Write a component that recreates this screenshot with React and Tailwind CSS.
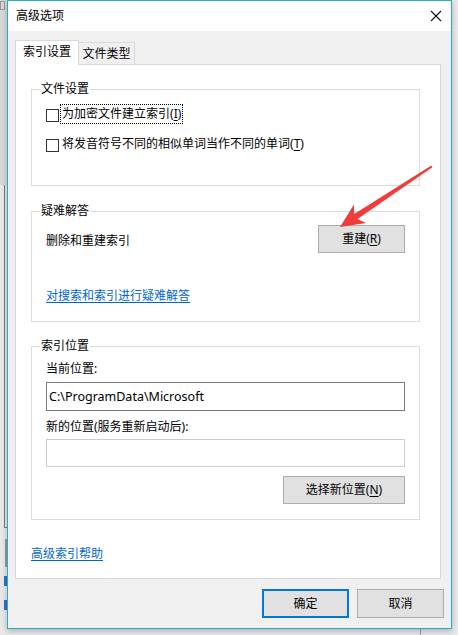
import React from "react";

// Access-key letter, e.g. (R) with the R underlined
function Key({ k }) {
    return (
        <>
            (<span className="underline underline-offset-2">{k}</span>)
        </>
    );
}

function GroupBox({ title, className, children }) {
    return (
        <div
            className={
                "relative ml-[15px] w-[389px] border border-[#dcdcdc] " +
                className
            }
        >
            <span className="absolute left-[8px] top-[-9px] bg-white px-[1px] leading-[16px]">
                {title}
            </span>
            {children}
        </div>
    );
}

function Checkbox({ label, focused }) {
    return (
        <div className="flex h-[20px] items-center">
            <span className="mt-[2px] h-[13px] w-[13px] border border-[#333333] bg-white" />
            <span
                className={
                    "ml-[2px] px-[1px] leading-[18px] " +
                    (focused
                        ? "outline outline-1 outline-dotted outline-black"
                        : "")
                }
            >
                {label}
            </span>
        </div>
    );
}

function Button({ children, className }) {
    return (
        <button
            className={
                "flex h-[28px] items-center justify-center border border-[#adadad] bg-[#e1e1e1] leading-[16px] " +
                className
            }
        >
            {children}
        </button>
    );
}

function Backdrop() {
    return (
        <div className="absolute left-0 top-0 h-full w-full">
            <div className="absolute left-0 top-0 h-[185px] w-[7px] bg-[#d9d9d9]" />
            <div className="absolute left-0 top-[1px] h-[9px] w-[5px] border border-[#9a9a9a]" />
            <div className="absolute left-[4px] top-[185px] h-[343px] w-px bg-[#7d7d7d]" />
            <div className="absolute left-[4px] top-[527px] h-px w-[3px] bg-[#7d7d7d]" />
            <div className="absolute left-[5px] top-[539px] h-[28px] w-[2px] border border-[#9a9a9a] bg-[#e1e1e1]" />
            <div className="absolute left-[4px] top-[576px] h-[10px] w-[3px] bg-[#3a6fd0]" />
            <div className="absolute left-[4px] top-[600px] h-[10px] w-[3px] bg-[#3a6fd0]" />
            <div className="absolute left-[420px] top-[628px] h-[7px] w-px bg-[#a0a0a0]" />
        </div>
    );
}

export default function App() {
    return (
        <div className="relative h-[635px] w-[458px] overflow-hidden bg-[#e9e9e9] font-['Noto_Sans','Noto_Sans_CJK_SC',sans-serif] text-[12px] leading-[16px] text-black">
            <Backdrop />

            <div className="relative ml-[7px] flex h-[629px] w-[445px] flex-col border border-[#27adc6] bg-[#f0f0f0] shadow-[0_2px_6px_rgba(0,0,0,0.25)]">
                {/* title bar */}
                <div className="flex h-[30px] items-center justify-between bg-white pl-[8px] pr-[9px]">
                    <span>高级选项</span>
                    <svg width="12" height="12" viewBox="0 0 12 12">
                        <path
                            d="M1 1 L11 11 M11 1 L1 11"
                            stroke="#111"
                            strokeWidth="1.1"
                            fill="none"
                        />
                    </svg>
                </div>

                <div className="flex flex-1 flex-col px-[7px] pt-[9px]">
                    {/* tabs */}
                    <div className="relative z-10 flex h-[24px] items-start">
                        <div className="flex h-[25px] w-[64px] items-center justify-center border border-b-0 border-[#d9d9d9] bg-white pb-[2px]">
                            索引设置
                        </div>
                        <div className="mt-[2px] flex h-[22px] w-[56px] items-center justify-center border border-l-0 border-b-0 border-[#d9d9d9] bg-[#f0f0f0]">
                            文件类型
                        </div>
                    </div>

                    <div className="flex h-[515px] w-[426px] flex-col border border-[#d9d9d9] bg-white">
                        <GroupBox title="文件设置" className="mt-[24px] h-[97px]">
                            <div className="flex flex-col gap-[10px] pl-[14px] pt-[14px]">
                                <Checkbox
                                    focused
                                    label={
                                        <>
                                            为加密文件建立索引<Key k="I" />
                                        </>
                                    }
                                />
                                <Checkbox
                                    label={
                                        <>
                                            将发音符号不同的相似单词当作不同的单词
                                            <Key k="T" />
                                        </>
                                    }
                                />
                            </div>
                        </GroupBox>

                        <GroupBox title="疑难解答" className="mt-[25px] h-[111px]">
                            <div className="flex items-start justify-between pl-[14px] pr-[14px] pt-[13px]">
                                <span className="mt-[8px]">删除和重建索引</span>
                                <Button className="w-[87px]">
                                    重建<Key k="R" />
                                </Button>
                            </div>
                            <div className="mt-[35px] pl-[14px]">
                                <span className="text-[#0066cc] underline underline-offset-2">
                                    对搜索和索引进行疑难解答
                                </span>
                            </div>
                        </GroupBox>

                        <GroupBox title="索引位置" className="mt-[24px] h-[174px]">
                            <div className="flex flex-col pl-[14px] pr-[14px] pt-[14px]">
                                <span>当前位置:</span>
                                <div className="mt-[5px] flex h-[29px] items-center border border-[#7a7a7a] px-[2px] text-[12.5px]">
                                    C:\ProgramData\Microsoft
                                </div>
                                <span className="mt-[8px]">新的位置(服务重新启动后):</span>
                                <div className="mt-[4px] h-[28px] border border-[#cccccc]" />
                                <Button className="ml-auto mt-[9px] w-[122px]">
                                    选择新位置<Key k="N" />
                                </Button>
                            </div>
                        </GroupBox>

                        <div className="ml-[15px] mt-[26px]">
                            <span className="text-[#0066cc] underline underline-offset-2">
                                高级索引帮助
                            </span>
                        </div>
                    </div>

                    {/* dialog buttons */}
                    <div className="mt-[10px] flex justify-end gap-[8px]">
                        <button className="flex h-[29px] w-[87px] items-center justify-center border-2 border-[#0078d7] bg-[#e1e1e1]">
                            确定
                        </button>
                        <Button className="h-[29px] w-[87px]">取消</Button>
                    </div>
                </div>
            </div>

            {/* red annotation arrow */}
            <svg
                className="pointer-events-none absolute left-0 top-0"
                width="458"
                height="635"
            >
                <g transform="translate(340 227) rotate(-33.4)">
                    <polygon
                        points="0,0 24,-11 19,-3 110,-1 110,1 19,3 24,11"
                        fill="#f23b3b"
                    />
                </g>
            </svg>
        </div>
    );
}
